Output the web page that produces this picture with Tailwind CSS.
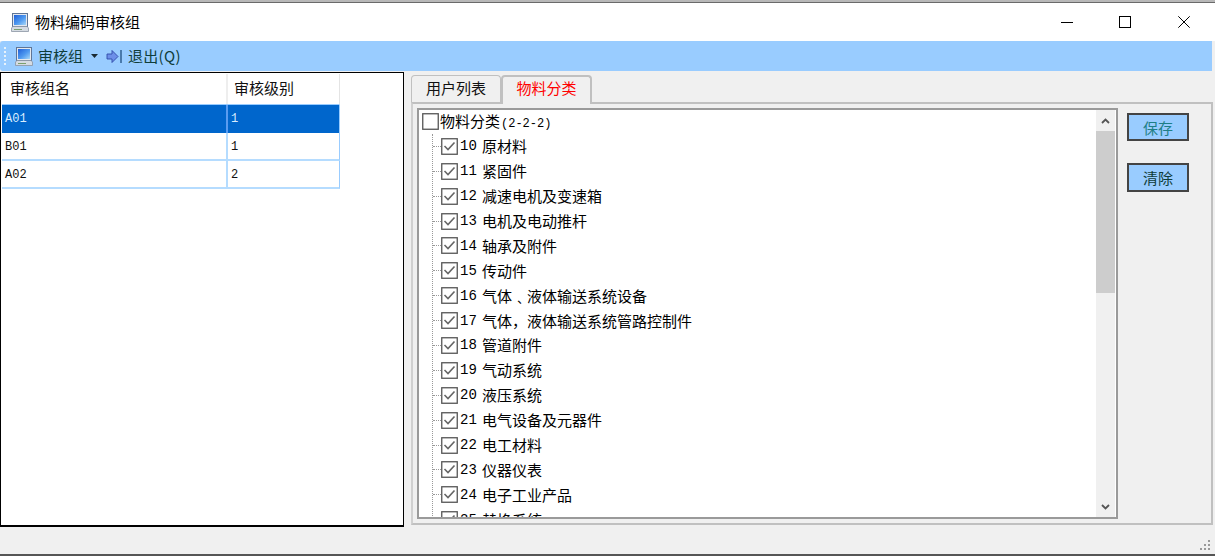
<!DOCTYPE html>
<html lang="zh-CN">
<head>
<meta charset="UTF-8" />
<title>物料编码审核组</title>
<script src="https://cdn.jsdelivr.net/npm/@tailwindcss/browser@4"></script>
</head>
<body class="w-[1215px] h-[556px] overflow-hidden bg-[#f0f0f0] font-['Noto_Sans_CJK_SC','Liberation_Sans',sans-serif] text-black">
<div class="flex flex-col h-[556px] border-t-2 border-t-[#b8b8b8]">

  <!-- title bar -->
  <div class="flex items-center h-[39px] bg-white border-t border-t-[#6a6a6a] pl-[11px]">
    <svg class="w-[18px] h-[19px]" viewBox="0 0 18 19"><defs><linearGradient id="scr" x1="0" y1="0" x2="1" y2="1"><stop offset="0" stop-color="#1f5fd8"/><stop offset=".55" stop-color="#4f9af0"/><stop offset="1" stop-color="#a8d8f8"/></linearGradient></defs><rect x="1.5" y=".5" width="15" height="13" fill="#e4e9ef" stroke="#5f7596"/><rect x="3" y="2" width="12" height="10" fill="url(#scr)"/><path d="M.5 15L2 13.5H16L17.5 15V18.5H.5Z" fill="#d5dbe2" stroke="#8a94a3" stroke-width=".8"/><path d="M3 16.5H11" stroke="#7aa06e" stroke-width="1"/></svg>
    <span class="ml-[6px] -mt-[2px] text-[15px] leading-none">物料编码审核组</span>
    <div class="ml-auto flex items-center">
      <svg class="w-[12px] h-[12px] mr-[46px]" viewBox="0 0 12 12"><path d="M0 6.5H12" stroke="#000"/></svg>
      <svg class="w-[12px] h-[12px] mr-[47px]" viewBox="0 0 12 12"><rect x=".5" y=".5" width="11" height="11" fill="none" stroke="#000"/></svg>
      <svg class="w-[12px] h-[12px] mr-[25px]" viewBox="0 0 12 12"><path d="M.3 .3L11.7 11.7M11.7 .3L.3 11.7" stroke="#000"/></svg>
    </div>
  </div>

  <!-- toolbar -->
  <div class="flex items-center h-[30px] bg-[#99ccff] mr-[3px] rounded-l-[3px] pl-[4px] text-[15px] text-[#0f3d3a]">
    <div class="flex flex-col gap-[2px] w-[3px]">
      <i class="block w-[2px] h-[2px] bg-[#e8f2fa]"></i><i class="block w-[2px] h-[2px] bg-[#e8f2fa]"></i><i class="block w-[2px] h-[2px] bg-[#e8f2fa]"></i><i class="block w-[2px] h-[2px] bg-[#e8f2fa]"></i><i class="block w-[2px] h-[2px] bg-[#e8f2fa]"></i>
    </div>
    <svg class="w-[18px] h-[19px] ml-[8px]" viewBox="0 0 18 19"><rect x="1.5" y=".5" width="15" height="13" fill="#e4e9ef" stroke="#5f7596"/><rect x="3" y="2" width="12" height="10" fill="url(#scr)"/><path d="M.5 15L2 13.5H16L17.5 15V18.5H.5Z" fill="#d5dbe2" stroke="#8a94a3" stroke-width=".8"/><path d="M3 16.5H11" stroke="#7aa06e" stroke-width="1"/></svg>
    <span class="ml-[5px] leading-none -mt-[2px]">审核组</span>
    <svg class="w-[7px] h-[4px] ml-[8px]" viewBox="0 0 7 4"><path d="M0 0H7L3.5 4Z" fill="#1a2a33"/></svg>
    <svg class="w-[17px] h-[15px] ml-[8px]" viewBox="0 0 17 15"><path d="M1 5H6V1.5L12 7.5L6 13.5V10H1Z" fill="#6d8fe8" stroke="#2f49a8" stroke-width=".9"/><path d="M15 1V14" stroke="#2f5f90" stroke-width="1.5"/></svg>
    <span class="ml-[5px] leading-none -mt-[2px] tracking-[0.3px]">退出(Q)</span>
  </div>

  <!-- main -->
  <div class="flex flex-1 min-h-0 pt-[1px]">
    <!-- grid -->
    <div class="w-[404px] h-[455px] bg-white border border-black border-b-2 pl-[1px] pt-[1px]">
      <div class="w-[338px] text-[15px]">
        <div class="flex h-[31px] border-b border-b-[#99ccff] border-r border-r-[#e4e4e4] leading-[28px] text-[#111]">
          <div class="w-[226px] pl-[8px] border-r-2 border-r-[#eeeeee]">审核组名</div>
          <div class="pl-[6px]">审核级别</div>
        </div>
        <div class="flex h-[28px] bg-[#0066cc] text-[#d8ecff] font-['Liberation_Mono',monospace] text-[12px] leading-[28px] border-r border-r-[#99ccff]">
          <div class="w-[226px] pl-[3px] border-r-2 border-r-[#5a9cf0]">A01</div>
          <div class="pl-[3px]">1</div>
        </div>
        <div class="flex h-[28px] text-[#111] font-['Liberation_Mono',monospace] text-[12px] leading-[28px] border-b-2 border-b-[#b5dcff] border-r border-r-[#99ccff]">
          <div class="w-[226px] pl-[3px] border-r-2 border-r-[#b5dcff]">B01</div>
          <div class="pl-[3px]">1</div>
        </div>
        <div class="flex h-[28px] text-[#111] font-['Liberation_Mono',monospace] text-[12px] leading-[28px] border-b-2 border-b-[#b5dcff] border-r border-r-[#99ccff]">
          <div class="w-[226px] pl-[3px] border-r-2 border-r-[#b5dcff]">A02</div>
          <div class="pl-[3px]">2</div>
        </div>
      </div>
    </div>

    <!-- tabs -->
    <div class="ml-[7px] w-[802px] flex flex-col pt-[1px]">
      <div class="flex h-[29px] items-start pt-[2px] text-[15px]">
        <div class="w-[90px] h-[27px] bg-[#f0f0f0] border border-b-0 border-[#c0c0c0] rounded-t-[4px] text-center leading-[23px] text-[#111]">用户列表</div>
        <div class="w-[91px] h-[29px] bg-[#f0f0f0] border-2 border-b-0 border-[#c0c0c0] rounded-t-[4px] text-center leading-[22px] text-[#ff0000] relative z-10">物料分类</div>
      </div>
      <div class="w-[802px] h-[423px] border-2 border-[#c0c0c0] border-l-[#d0d0d0] flex pt-[4px] pl-[4px]">
        <!-- tree -->
        <div class="w-[701px] h-[411px] bg-white border-2 border-[#9a9a9a] flex overflow-hidden">
          <div class="w-[677px] h-[407px] overflow-hidden pl-[3px] text-[15px] text-black">
            <div class="flex items-center h-[23.9px]">
              <svg class="w-[17px] h-[17px] shrink-0" viewBox="0 0 17 17"><rect x=".75" y=".75" width="15.5" height="15.5" fill="#fff" stroke="#555" stroke-width="1.3"/></svg>
              <span class="ml-[1px] leading-none">物料分类<span class="font-['Liberation_Mono',monospace] text-[12px] ml-[1px]">(2-2-2)</span></span>
            </div>
            <div id="nodes" class="ml-[10px] border-l border-dotted border-l-[#999]"></div>
          </div>
          <!-- scrollbar -->
          <div class="w-[19px] h-[407px] bg-[#f0f0f0] flex flex-col items-center">
            <div class="h-[21px] w-full flex items-center justify-center"><svg class="w-[9px] h-[6px]" viewBox="0 0 9 6"><path d="M1 5L4.5 1.5L8 5" fill="none" stroke="#555" stroke-width="1.8"/></svg></div>
            <div class="h-[162px] w-full bg-[#cdcdcd]"></div>
            <div class="flex-1"></div>
            <div class="h-[21px] w-full flex items-center justify-center"><svg class="w-[9px] h-[6px]" viewBox="0 0 9 6"><path d="M1 1L4.5 4.5L8 1" fill="none" stroke="#555" stroke-width="1.8"/></svg></div>
          </div>
        </div>
        <!-- buttons -->
        <div class="flex flex-col ml-[9px] pt-[5px] text-[15px]">
          <button class="w-[62px] h-[28px] bg-[#99ccff] border-2 border-[#444] text-[#1f7f86] leading-none">保存</button>
          <button class="w-[62px] h-[29px] mt-[22px] bg-[#99ccff] border-2 border-[#444] text-[#0f3d3a] leading-none">清除</button>
        </div>
      </div>
    </div>
  </div>

  <!-- status bar -->
  <div class="flex justify-end items-end h-[27px] border-b-2 border-b-[#555] pr-[4px] pb-[3px]">
    <svg class="w-[12px] h-[12px]" viewBox="0 0 12 12" fill="#999"><rect x="9" y="1" width="2" height="2"/><rect x="5" y="5" width="2" height="2"/><rect x="9" y="5" width="2" height="2"/><rect x="1" y="9" width="2" height="2"/><rect x="5" y="9" width="2" height="2"/><rect x="9" y="9" width="2" height="2"/></svg>
  </div>
</div>
<script>
  var items = ["10|原材料","11|紧固件","12|减速电机及变速箱","13|电机及电动推杆","14|轴承及附件","15|传动件","16|气体﹑液体输送系统设备","17|气体，液体输送系统管路控制件","18|管道附件","19|气动系统","20|液压系统","21|电气设备及元器件","22|电工材料","23|仪器仪表","24|电子工业产品","25|替换系统"];
  document.getElementById("nodes").innerHTML = items.map(function (s) {
    var p = s.split("|");
    return '<div class="flex items-center h-[24.9px]"><i class="block w-[8px] border-t border-dotted border-t-[#999]"></i>' +
      '<svg class="w-[17px] h-[17px] shrink-0" viewBox="0 0 17 17"><rect x=".75" y=".75" width="15.5" height="15.5" fill="#fff" stroke="#555" stroke-width="1.3"/><path d="M3.5 8L7 11.5L13.5 4.5" fill="none" stroke="#666" stroke-width="1.6"/></svg>' +
      '<span class="ml-[2px] pt-[1px] font-[\'Liberation_Mono\',monospace] text-[14px] w-[22px] shrink-0">' + p[0] + '</span>' +
      '<span class="leading-none -mt-[1px]">' + p[1] + '</span></div>';
  }).join("");
</script>
</body>
</html>
